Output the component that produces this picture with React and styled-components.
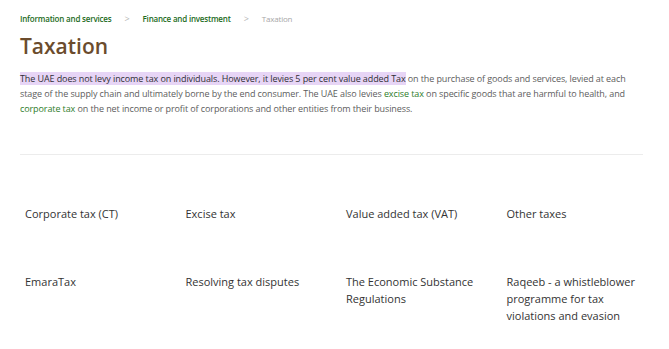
import styled, { createGlobalStyle } from "styled-components";

const GlobalStyle = createGlobalStyle`
  body {
    margin: 0;
    background: #ffffff;
    font-family: "Open Sans", "Noto Sans", sans-serif;
  }
`

const links = [
    "Corporate tax (CT)",
    "Excise tax",
    "Value added tax (VAT)",
    "Other taxes",
    "EmaraTax",
    "Resolving tax disputes",
    "The Economic Substance Regulations",
    "Raqeeb - a whistleblower programme for tax violations and evasion",
]

const App = () => {
    return <>
        <GlobalStyle/>
        <Page>
            <Breadcrumb>
                <Crumb>Information and services</Crumb>
                <Chevron>&gt;</Chevron>
                <Crumb>Finance and investment</Crumb>
                <Chevron>&gt;</Chevron>
                <Crumb $current>Taxation</Crumb>
            </Breadcrumb>
            <Title>Taxation</Title>
            <Intro>
                <Mark>The UAE does not levy income tax on individuals. However, it levies 5 per cent value added Tax</Mark> on
                the purchase of goods and services, levied at each stage of the supply chain and ultimately borne by the end
                consumer. The UAE also levies <Link>excise tax</Link> on specific goods that are harmful to health, and <Link>corporate
                tax</Link> on the net income or profit of corporations and other entities from their business.
            </Intro>
            <Divider/>
            <Grid>
                {links.map(text => <Card key={text}>{text}</Card>)}
            </Grid>
        </Page>
    </>
}

const Page = styled.div`
  padding: 10px 26px 0 20px;
`

const Breadcrumb = styled.nav`
  display: flex;
  align-items: center;
  gap: 13px;
  height: 16px;
  font-size: 8px;
`

const Crumb = styled.span`
  color: ${p => p.$current ? "#a8a8a8" : "#1d6b22"};
  font-weight: ${p => p.$current ? 400 : 600};
  letter-spacing: -0.2px;
`

const Chevron = styled.span`
  color: #b5b5b5;
  font-size: 9px;
`

const Title = styled.h1`
  margin: 6px 0 0;
  font-size: 21px;
  font-weight: 600;
  color: #6b4c2d;
  line-height: 28px;
`

const Intro = styled.p`
  margin: 11px 0 0;
  font-size: 9px;
  line-height: 15px;
  color: #5d5d5d;
  letter-spacing: -0.1px;
`

const Mark = styled.span`
  background: #e7d5f6;
  color: #2f2f35;
`

const Link = styled.span`
  color: #2e7d2a;
`

const Divider = styled.hr`
  margin: 38px 0 0;
  border: none;
  border-top: 1px solid #ececec;
`

const Grid = styled.div`
  display: grid;
  grid-template-columns: repeat(4, 160.5px);
  margin: 0 0 0 5px;
`

const Card = styled.div`
  padding: 50px 20px 0 0;
  min-height: 18px;
  font-size: 11px;
  line-height: 17px;
  color: #333333;
`

export default App;
